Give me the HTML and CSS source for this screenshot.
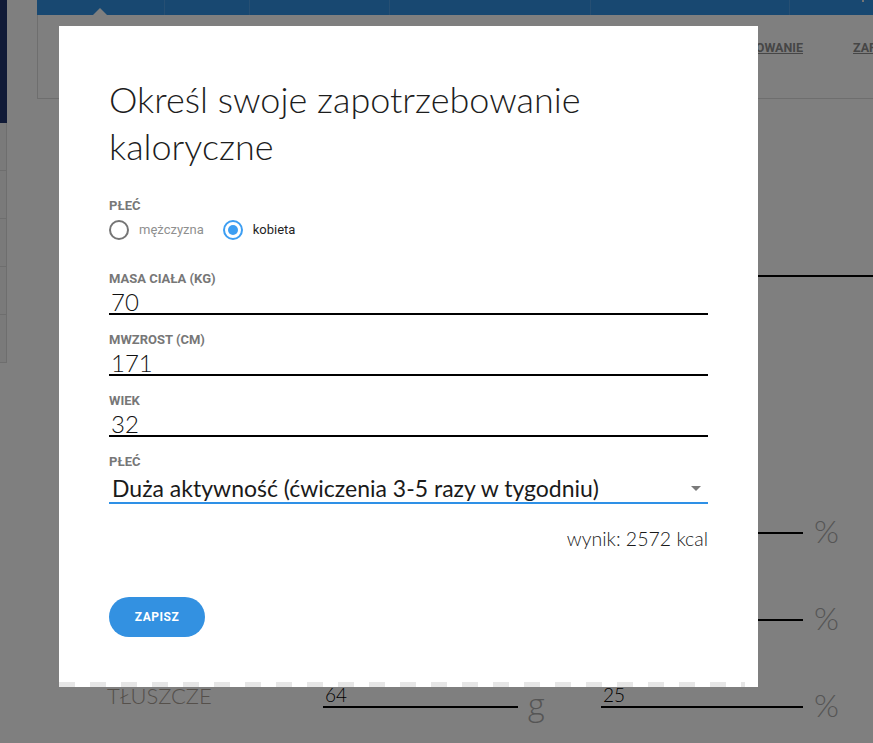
FILE: index.html
```html
<!DOCTYPE html>
<html lang="pl">
<head>
<meta charset="utf-8">
<title>Zapotrzebowanie kaloryczne</title>
<link rel="stylesheet" href="styles.css">
</head>
<body>
<div class="app">
  <aside class="sidebar">
    <div class="sidebar-head"></div>
    <ul class="sidebar-list">
      <li></li><li></li><li></li><li></li><li></li>
    </ul>
  </aside>
  <main class="main">
    <nav class="topnav">
      <span class="topnav-tab"></span>
      <span class="topnav-tab"></span>
      <span class="topnav-tab"></span>
      <span class="topnav-tab"></span>
      <span class="topnav-tab"></span>
      <span class="topnav-tab topnav-tab--last"></span>
      <span class="topnav-notch"></span>
      <span class="topnav-mark"></span>
    </nav>
    <div class="subbar">
      <div class="sublinks">
        <a class="sublink sublink--first">ZAPOTRZEBOWANIE</a>
        <a class="sublink">ZAP</a>
      </div>
    </div>
    <section class="content">
      <div class="goal-line"></div>
      <div class="macro-row">
        <span class="macro-name">BIAŁKO</span>
        <span class="macro-input">96</span>
        <span class="macro-unit macro-unit--g">g</span>
        <span class="macro-input">15</span>
        <span class="macro-unit">%</span>
      </div>
      <div class="macro-row">
        <span class="macro-name">WĘGLOWODANY</span>
        <span class="macro-input">386</span>
        <span class="macro-unit macro-unit--g">g</span>
        <span class="macro-input">60</span>
        <span class="macro-unit">%</span>
      </div>
      <div class="macro-row">
        <span class="macro-name">TŁUSZCZE</span>
        <span class="macro-input">64</span>
        <span class="macro-unit macro-unit--g">g</span>
        <span class="macro-input">25</span>
        <span class="macro-unit">%</span>
      </div>
    </section>
  </main>
</div>

<div class="overlay"></div>

<div class="modal" role="dialog">
  <h1 class="modal-title">Określ swoje zapotrzebowanie kaloryczne</h1>
  <form class="calc-form">
    <div class="field field--gender">
      <span class="field-label">PŁEĆ</span>
      <div class="radio-group">
        <label class="radio"><span class="radio-circle"></span><span class="radio-text">mężczyzna</span></label>
        <label class="radio radio--checked"><span class="radio-circle"></span><span class="radio-text">kobieta</span></label>
      </div>
    </div>
    <div class="field">
      <span class="field-label">MASA CIAŁA (KG)</span>
      <div class="field-value">70</div>
    </div>
    <div class="field">
      <span class="field-label">MWZROST (CM)</span>
      <div class="field-value">171</div>
    </div>
    <div class="field">
      <span class="field-label">WIEK</span>
      <div class="field-value">32</div>
    </div>
    <div class="field">
      <span class="field-label">PŁEĆ</span>
      <div class="field-select">
        <span>Duża aktywność (ćwiczenia 3-5 razy w tygodniu)</span>
        <span class="select-arrow"></span>
      </div>
    </div>
    <p class="result">wynik: 2572 kcal</p>
    <div class="actions">
      <button type="button" class="btn-save">ZAPISZ</button>
    </div>
  </form>
</div>
</body>
</html>
```

FILE: styles.css
```css
html, body {
  margin: 0;
  padding: 0;
}

body {
  width: 873px;
  height: 743px;
  overflow: hidden;
  background: #ffffff;
  font-family: "Lato", "Noto Sans", sans-serif;
  color: #212121;
}

/* ---------- background page ---------- */
.app {
  display: flex;
  min-height: 743px;
}

.sidebar {
  width: 7px;
  flex: none;
}

.sidebar-head {
  height: 123px;
  background: #20346f;
}

.sidebar-list {
  list-style: none;
  margin: 0;
  padding: 0;
  background: #f5f5f5;
  border-right: 1px solid #dcdcdc;
}

.sidebar-list li {
  height: 47px;
  border-bottom: 1px solid #dcdcdc;
}

.main {
  flex: 1;
  min-width: 0;
  margin-left: 30px;
}

.topnav {
  position: relative;
  height: 15px;
  background: #3090e3;
  display: grid;
  grid-template-columns: 128px 85px 140px 201px 199px 1fr;
}

.topnav-tab {
  border-right: 1px solid rgba(255, 255, 255, 0.14);
}

.topnav-tab--last {
  border-right: none;
}

.topnav-notch {
  position: absolute;
  left: 56px;
  bottom: 0;
  width: 0;
  height: 0;
  border-left: 7px solid transparent;
  border-right: 7px solid transparent;
  border-bottom: 7px solid #ffffff;
}

.topnav-mark {
  position: absolute;
  right: 9px;
  top: 0;
  width: 2px;
  height: 2px;
  background: #e8e8e8;
}

.subbar {
  box-sizing: border-box;
  height: 84px;
  padding-top: 25px;
  border-left: 1px solid #dcdcdc;
  border-bottom: 1px solid #dcdcdc;
  overflow: hidden;
}

.sublinks {
  display: grid;
  grid-template-columns: 765px max-content;
  column-gap: 50px;
}

.sublink {
  font-family: "Roboto", sans-serif;
  font-weight: 700;
  font-size: 12.5px;
  line-height: 16px;
  color: #8c8c8c;
  text-decoration: underline;
  white-space: nowrap;
}

.sublink--first {
  justify-self: end;
}

.content {
  padding-left: 70px;
}

.goal-line {
  margin-top: 176px;
  margin-left: 430px;
  margin-right: -70px;
  border-top: 2px solid #000;
}

.macro-row {
  display: grid;
  grid-template-columns: 216px 195px 83px 202px 1fr;
  align-items: end;
  height: 87px;
}

.goal-line + .macro-row {
  margin-top: 170px;
}

.macro-name {
  font-family: "Lato", sans-serif;
  font-weight: 300;
  font-size: 22px;
  line-height: 24px;
  color: #aaa197;
}

.macro-input {
  font-family: "Lato", sans-serif;
  font-weight: 300;
  font-size: 19px;
  line-height: 22px;
  color: #000;
  padding-left: 2px;
  border-bottom: 2px solid #000;
}

.macro-unit {
  font-family: "Lato", sans-serif;
  font-weight: 300;
  font-size: 32px;
  line-height: 36px;
  color: #ababab;
  padding-left: 11px;
  margin-bottom: -15px;
}

.macro-unit--g {
  font-family: "Open Sans", sans-serif;
  padding-left: 10px;
  margin-bottom: -14px;
}

/* ---------- overlay & modal ---------- */
.overlay {
  position: fixed;
  inset: 0;
  background: rgba(0, 0, 0, 0.5);
}

.modal {
  position: absolute;
  left: 59px;
  top: 26px;
  box-sizing: border-box;
  width: 699px;
  height: 661px;
  padding: 50px 50px 0 50px;
  background-color: #ffffff;
  background-image: repeating-linear-gradient(90deg, #e6e6e6 0 16px, #ffffff 16px 31px);
  background-repeat: no-repeat;
  background-position: left bottom;
  background-size: 686px 5px;
}

.modal-title {
  margin: 0;
  font-family: "Lato", sans-serif;
  font-weight: 300;
  font-size: 36px;
  line-height: 47px;
  color: #1d1d1d;
}

.calc-form {
  display: flex;
  flex-direction: column;
  gap: 17px;
  margin-top: 28px;
}

.field {
  display: flex;
  flex-direction: column;
}

.field--gender {
  margin-bottom: 14px;
}

.field-label {
  font-family: "Roboto", sans-serif;
  font-weight: 700;
  font-size: 13px;
  line-height: 16px;
  color: #777777;
}

.radio-group {
  display: flex;
  gap: 19px;
  margin-top: 6px;
  height: 20px;
}

.radio {
  display: flex;
  align-items: center;
  gap: 10px;
}

.radio-circle {
  box-sizing: border-box;
  width: 20px;
  height: 20px;
  border-radius: 50%;
  border: 2px solid #757575;
  display: flex;
  align-items: center;
  justify-content: center;
}

.radio--checked .radio-circle {
  border-color: #3d9ef2;
}

.radio--checked .radio-circle::after {
  content: "";
  width: 10px;
  height: 10px;
  border-radius: 50%;
  background: #3d9ef2;
}

.radio-text {
  font-family: "Roboto", sans-serif;
  font-size: 13px;
  line-height: 16px;
  color: #8f8f8f;
}

.radio--checked .radio-text {
  color: #1f1f1f;
}

.field-value {
  margin-top: 4px;
  padding-left: 2px;
  font-family: "Lato", sans-serif;
  font-weight: 300;
  font-size: 24px;
  line-height: 22px;
  color: #111111;
  border-bottom: 2px solid #000000;
}

.field-select {
  margin-top: 4px;
  display: flex;
  align-items: center;
  justify-content: space-between;
  padding-left: 3px;
  padding-right: 7px;
  font-family: "Lato", sans-serif;
  font-weight: 400;
  font-size: 23px;
  line-height: 28px;
  color: #1a1a1a;
  border-bottom: 2px solid #2e90e6;
}

.select-arrow {
  width: 0;
  height: 0;
  border-left: 5px solid transparent;
  border-right: 5px solid transparent;
  border-top: 5px solid #7a7a7a;
}

.result {
  margin: 6px 0 0 0;
  text-align: right;
  font-family: "Lato", sans-serif;
  font-weight: 300;
  font-size: 19.5px;
  line-height: 24px;
  color: #1a1a1a;
}

.actions {
  margin-top: 29px;
}

.btn-save {
  width: 96px;
  height: 40px;
  border: none;
  border-radius: 20px;
  background: #3391e1;
  color: #ffffff;
  font-family: "Roboto", sans-serif;
  font-weight: 700;
  font-size: 12px;
  letter-spacing: 0.5px;
  padding: 0;
}
```
